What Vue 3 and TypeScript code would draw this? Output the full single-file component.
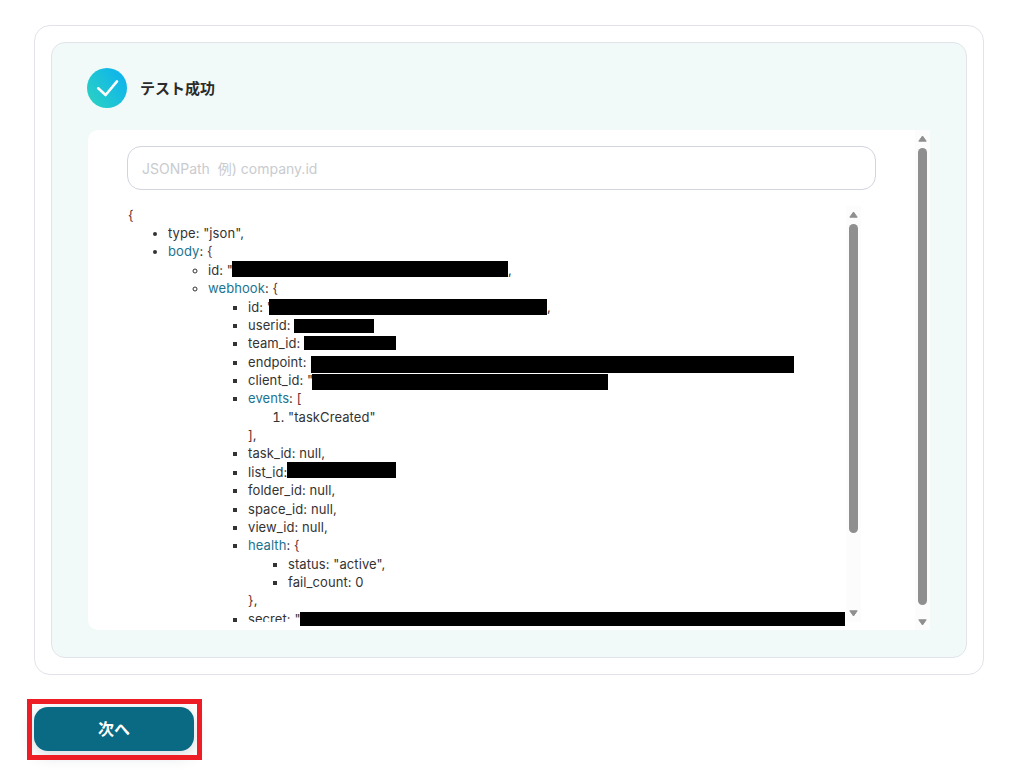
<script setup lang="ts">
// A redaction bar sits on the text line without changing the line's height:
// its margin box collapses onto the baseline, and the bar hangs `drop` px below it.
const r = (width: number, height: number, drop: number, shift = 0) => ({
  width: width + 'px',
  height: height + 'px',
  marginTop: drop - height + 'px',
  marginBottom: -drop + 'px',
  marginLeft: shift + 'px',
})
</script>

<template>
  <main class="page">
    <section class="card">
      <div class="result">
        <header class="head">
          <svg class="badge" width="40" height="40" viewBox="0 0 40 40" aria-hidden="true">
            <defs>
              <linearGradient id="bg" x1="0" y1="1" x2="1" y2="0.3">
                <stop offset="0" stop-color="#2dd4bf" />
                <stop offset="1" stop-color="#0eb4ec" />
              </linearGradient>
            </defs>
            <circle cx="20" cy="20" r="20" fill="url(#bg)" />
            <path d="M11.2 20.3 L18.6 27 L30 13.4" fill="none" stroke="#fff" stroke-width="2.6" stroke-linecap="round" stroke-linejoin="round" />
          </svg>
          <h2>テスト成功</h2>
        </header>

        <div class="panel">
          <div class="panel-body">
            <input class="path" type="text" placeholder="JSONPath  例) company.id" />
            <div class="viewer">
              <div class="tree">
                <div><b>{</b></div>
                <ul class="l1">
                  <li>type: "json",</li>
                  <li><i>body</i>: <b>{</b>
                    <ul class="l2">
                      <li>id: "<span class="redact" :style="r(276, 16, 2, -1)"></span>,</li>
                      <li><i>webhook</i>: <b>{</b>
                        <ul class="l3">
                          <li>id: "<span class="redact" :style="r(278, 16, 3, -4)"></span>,</li>
                          <li>userid: <span class="redact" :style="r(80, 14, 3)"></span></li>
                          <li>team_id: <span class="redact" :style="r(92, 14, 2)"></span></li>
                          <li>endpoint: <span class="redact" :style="r(483, 17, 6, 1)"></span></li>
                          <li>client_id: "<span class="redact" :style="r(296, 16, 5, -1)"></span></li>
                          <li><i>events</i>: <b>[</b>
                            <ol>
                              <li>"taskCreated"</li>
                            </ol>
                            <b>]</b>,
                          </li>
                          <li>task_id: null,</li>
                          <li>list_id:<span class="redact" :style="r(109, 16, 1)"></span></li>
                          <li>folder_id: null,</li>
                          <li>space_id: null,</li>
                          <li>view_id: null,</li>
                          <li><i>health</i>: <b>{</b>
                            <ul class="l3">
                              <li>status: "active",</li>
                              <li>fail_count: 0</li>
                            </ul>
                            <b>}</b>,
                          </li>
                          <li><span class="cut">secret: "</span><span class="redact" :style="r(545, 14, 2, -1)"></span></li>
                        </ul>
                      </li>
                    </ul>
                  </li>
                </ul>
              </div>
              <div class="bar inner-bar">
                <svg class="arrow" viewBox="0 0 9 7" aria-hidden="true"><path d="M4.5 1 L8.2 6.2 H0.8 Z" /></svg>
                <span class="thumb"></span>
                <svg class="arrow down" viewBox="0 0 9 7" aria-hidden="true"><path d="M0.8 0.8 H8.2 L4.5 6 Z" /></svg>
              </div>
            </div>
          </div>
          <div class="bar outer-bar">
            <svg class="arrow" viewBox="0 0 9 7" aria-hidden="true"><path d="M4.5 1 L8.2 6.2 H0.8 Z" /></svg>
            <span class="thumb"></span>
            <svg class="arrow down" viewBox="0 0 9 7" aria-hidden="true"><path d="M0.8 0.8 H8.2 L4.5 6 Z" /></svg>
          </div>
        </div>
      </div>
    </section>

    <div class="action">
      <button class="next" type="button"><span>次へ</span></button>
    </div>
  </main>
</template>

<style scoped>
.page {
  width: 1014px;
  height: 774px;
  box-sizing: border-box;
  padding: 25px 30px 0 34px;
  overflow: hidden;
  background: #fff;
  font-family: Inter, "Noto Sans CJK JP", sans-serif;
}
.card {
  height: 650px;
  box-sizing: border-box;
  padding: 16px;
  background: #fff;
  border: 1px solid #e2e3ea;
  border-radius: 16px;
}
.result {
  height: 616px;
  box-sizing: border-box;
  padding: 25px 35px 0;
  background: #f1faf9;
  border: 1px solid #e2e4e9;
  border-radius: 14px;
}
.head {
  display: flex;
  align-items: center;
  gap: 13px;
  height: 40px;
  margin-bottom: 22px;
}
.badge {
  flex: none;
}
h2 {
  margin: 0;
  padding-bottom: 2px;
  font-size: 15px;
  font-weight: 700;
  color: #2b2b2b;
}
.panel {
  display: flex;
  height: 500px;
  margin-left: 1px;
  width: 842px;
  background: #fff;
  border-radius: 10px;
}
.panel-body {
  flex: 1;
  min-width: 0;
  padding: 16px 0 0 39px;
}
.path {
  display: block;
  box-sizing: border-box;
  width: 749px;
  height: 44px;
  padding: 0 14px;
  font: 14px Inter, "Noto Sans CJK JP", sans-serif;
  color: #333;
  background: #fff;
  border: 1px solid #d2d5de;
  border-radius: 14px;
  outline: none;
  white-space: pre;
}
.path::placeholder {
  color: #c9cbcf;
  opacity: 1;
}
.viewer {
  display: flex;
  height: 416px;
  margin: 16px 0 0 1px;
  width: 733px;
}
.tree {
  flex: 1;
  min-width: 0;
  height: 416px;
  margin-top: -0.26px;
  font-size: 13px;
  letter-spacing: 0.08px;
  line-height: 18.36px;
  color: #333;
  white-space: nowrap;
}
ul,
ol {
  margin: 0;
  padding-left: 40px;
}
.l1 {
  list-style: disc;
}
.l2 {
  list-style: circle;
}
.l3 {
  list-style: square;
}
ol {
  list-style: decimal;
}
.tree b {
  font-weight: 400;
  color: #6f2f2f;
}
.tree i {
  font-style: normal;
  color: #1a7390;
}
.cut {
  display: inline-block;
  clip-path: inset(0 0 6px 0);
}
.redact {
  display: inline-block;
  background: #000;
}
.bar {
  flex: none;
  display: flex;
  flex-direction: column;
  align-items: center;
  width: 15px;
  box-sizing: border-box;
  background: #fcfcfc;
}
.thumb {
  width: 9px;
  border-radius: 5px;
  background: #8f8f8f;
}
.arrow {
  flex: none;
  display: block;
  width: 9px;
  height: 7px;
  overflow: visible;
}
.arrow path {
  fill: #8f8f8f;
  stroke: #8f8f8f;
  stroke-width: 1;
  stroke-linejoin: round;
}
.arrow.down {
  margin-top: auto;
}
.inner-bar {
  padding: 5px 0 5px;
}
.inner-bar .thumb {
  height: 309px;
  margin-top: 6px;
}
.outer-bar {
  height: 500px;
  padding: 5px 0 4px;
}
.outer-bar .thumb {
  height: 457px;
  margin-top: 6px;
}
.action {
  position: relative;
  width: 160px;
  margin-top: 32px;
}
.action::after {
  content: "";
  position: absolute;
  left: -7px;
  top: -8px;
  width: 175px;
  height: 61px;
  box-sizing: border-box;
  border: 5px solid #ee1c25;
  pointer-events: none;
}
.next {
  display: block;
  width: 160px;
  height: 44px;
  padding: 0 0 2px;
  font: 700 16px Inter, "Noto Sans CJK JP", sans-serif;
  color: #fff;
  background: #0a6a84;
  border: 0;
  border-radius: 14px;
  box-shadow: 0 4px 16px rgba(40, 60, 90, 0.2);
}
</style>
